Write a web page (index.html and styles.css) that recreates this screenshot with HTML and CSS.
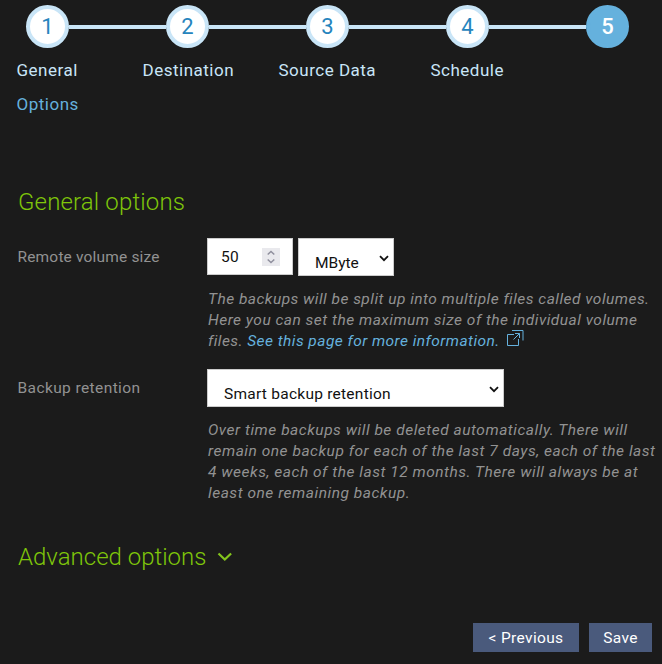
FILE: index.html
```html
<!DOCTYPE html>
<html lang="en">
<head>
<meta charset="utf-8">
<title>Backup options</title>
<link rel="stylesheet" href="styles.css">
</head>
<body>
<nav>
  <ol class="steps">
    <li class="step"><span class="circle">1</span></li>
    <li class="step"><span class="circle">2</span></li>
    <li class="step"><span class="circle">3</span></li>
    <li class="step"><span class="circle">4</span></li>
    <li class="step active"><span class="circle">5</span></li>
  </ol>
  <div class="legends">
    <span class="general">General</span><span class="destination">Destination</span><span class="source">Source Data</span><span class="schedule">Schedule</span><span class="current">Options</span>
  </div>
</nav>
<main>
  <h2 class="general-title">General options</h2>
  <div class="field volume">
    <label>Remote volume size</label>
    <div class="controls">
      <div class="box number"><span>50</span>
        <svg class="spinner" width="18" height="18" viewBox="0 0 18 18"><rect width="18" height="18" fill="#e9e9ed"/><path d="M5.7 6.5 9 3.5l3.3 3M5.7 11.5l3.3 3 3.3-3" fill="none" stroke="#8f8f9d" stroke-width="1.5"/></svg>
      </div>
      <div class="box unit"><span>MByte</span><svg class="arrow" width="10" height="7" viewBox="0 0 10 7"><path d="m1 1.2 4 4 4-4" fill="none" stroke="#111" stroke-width="1.8"/></svg></div>
    </div>
  </div>
  <p class="help volume-help">
    <span class="v1">The backups will be split up into multiple files called volumes.</span>
    <span class="v2">Here you can set the maximum size of the individual volume</span>
    <span class="v3">files. <a>See this page for more information.</a> <svg width="17" height="17" viewBox="0 0 17 17"><path d="M7 4.5H.5v11h11V9M5 .5h11v10M6.5 9.5l6-6M8 3.5h4.5V8" fill="none" stroke="#65b1dd"/></svg></span>
  </p>
  <div class="field retention">
    <label>Backup retention</label>
    <div class="box policy"><span>Smart backup retention</span><svg class="arrow" width="10" height="7" viewBox="0 0 10 7"><path d="m1 1.2 4 4 4-4" fill="none" stroke="#111" stroke-width="1.8"/></svg></div>
  </div>
  <p class="help retention-help">
    <span class="r1">Over time backups will be deleted automatically. There will</span>
    <span class="r2">remain one backup for each of the last 7 days, each of the last</span>
    <span class="r3">4 weeks, each of the last 12 months. There will always be at</span>
    <span class="r4">least one remaining backup.</span>
  </p>
  <h2 class="advanced-title"><span>Advanced options</span><svg width="16" height="10" viewBox="0 0 16 10"><path d="m1.5 1.5 6.3 6 6.3-6" fill="none" stroke="#83c51d" stroke-width="2.2"/></svg></h2>
  <div class="buttons"><button class="previous">&lt; Previous</button><button class="save">Save</button></div>
</main>
</body>
</html>
```
FILE: styles.css
```css
* { box-sizing: border-box; }
body {
  margin: 0;
  height: 664px;
  overflow: hidden;
  background: #1b1b1b;
  color: #929292;
  font: 15.5px/21px Roboto, "Noto Sans", sans-serif;
}
h2, p, ol { margin: 0; padding: 0; }
nav { padding-top: 5px; }
.steps { display: flex; list-style: none; padding-left: 26px; }
.step { display: flex; align-items: center; width: 140px; flex: none; }
.step.active { width: 43px; }
.step:not(.active)::after { content: ""; flex: 1; height: 4px; background: #c9e5f7; }
.circle {
  width: 43px; height: 43px;
  flex: none;
  border: 4px solid #c9e5f7;
  border-radius: 50%;
  background: #fff;
  color: #2684bd;
  font-size: 22px;
  line-height: 36px;
  text-align: center;
}
.active .circle { background: #65b1dd; border-color: #65b1dd; color: #fff; font-weight: 500; }
.legends {
  display: grid;
  grid-template-columns: 126px 136px 152px 100px;
  grid-auto-rows: 34px;
  padding: 5px 0 0 16.5px;
  color: #c9e5f7;
  font-size: 17px;
  line-height: 34px;
  letter-spacing: .5px;
  white-space: nowrap;
}
.legends .current { color: #65b1dd; }
main { padding: 66px 10px 0 18px; }
h2 { height: 32px; color: #7fc60a; font-size: 24px; font-weight: 300; line-height: 32px; letter-spacing: .15px; white-space: nowrap; }
.general-title { line-height: 31px; }
.field { display: grid; grid-template-columns: 189px auto; height: 39px; }
.volume { margin-top: 19px; }
.field label { line-height: 38px; letter-spacing: .17px; margin-left: -.5px; }
.retention label { letter-spacing: .4px; }
.controls { display: flex; gap: 5px; align-items: flex-start; }
.box { display: flex; justify-content: space-between; background: #fff; border: 1px solid #ccc; color: #111; height: 38px; }
.number { width: 86px; height: 37px; padding: 0 12px 0 13px; align-items: center; }
.number span { padding-top: 1px; letter-spacing: .3px; }
.unit { width: 96px; padding: 0 4px 0 16px; }
.unit span, .policy span { line-height: 48px; height: 36px; }
.policy { width: 297px; padding: 0 4px 0 16px; }
.policy span { letter-spacing: .25px; }
.arrow { margin-top: 16px; }
.help { margin-left: 190px; font-style: italic; }
.help span { display: block; height: 21px; white-space: nowrap; width: max-content; letter-spacing: .52px; }
.help .v1 { letter-spacing: .47px; }
.help .v2 { letter-spacing: .49px; }
.help .v3 { letter-spacing: .45px; }
.help a { color: #65b1dd; }
.help svg { margin: -5px 0 -2px 3px; vertical-align: 1px; }
.volume-help { margin-top: 12px; }
.retention { margin-top: 17px; }
.retention-help { margin-top: 12px; }
.advanced-title { margin-top: 37px; display: flex; align-items: center; gap: 11px; letter-spacing: 0; }
.buttons { display: flex; justify-content: flex-end; gap: 10px; margin-top: 50px; }
button { height: 29px; padding: 1px 0 0; border: 0; border-radius: 0; background: #4a5a7c; color: #fff; font: inherit; letter-spacing: .35px; }
.previous { width: 106px; }
.save { width: 63px; }
```
